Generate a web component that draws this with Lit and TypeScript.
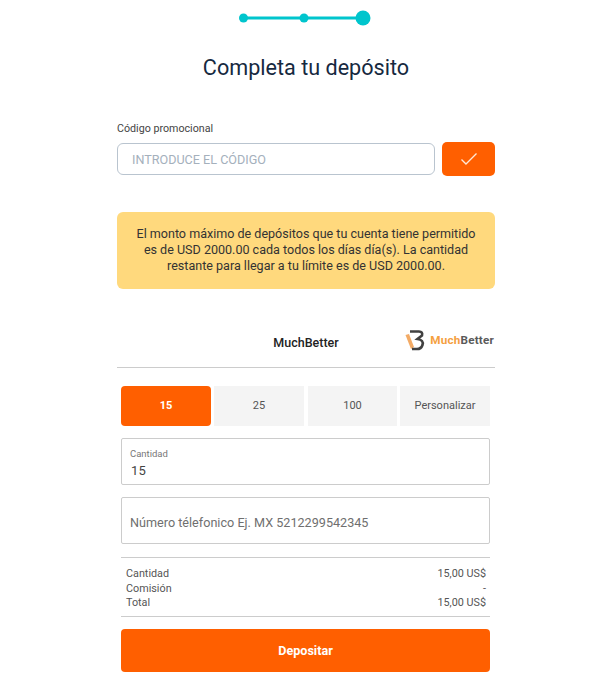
import { LitElement, html, css } from "lit";
import { customElement } from "lit/decorators.js";

@customElement("app-root")
export class AppRoot extends LitElement {
  static styles = css`
    :host { display: block; width: 610px; height: 689px; background: #fff; font-family: Roboto, sans-serif; overflow: hidden; }
    .page { padding: 0 115px 0 117px; display: flex; flex-direction: column; }
    .stepper { align-self: center; display: block; margin: 8px 0 0 0; }
    h1 { margin: 24px 0 0; font-size: 21.6px; font-weight: 400; line-height: 32px; color: #16293f; text-align: center; }
    .code-label { margin-top: 37px; font-size: 10.7px; line-height: 16px; color: #444; }
    .code-row { display: flex; gap: 7px; margin-top: 6px; }
    .code-input { flex: 1; height: 30px; border: 1px solid #b9c4cf; border-radius: 6px; padding: 0 14px; display: flex; align-items: center; font-size: 12.6px; color: #a4b0bc; }
    .code-btn { width: 53px; height: 34px; background: #ff5f00; border-radius: 5px; display: flex; align-items: center; justify-content: center; margin-top: -1px; }
    .notice { margin-top: 36px; height: 77px; box-sizing: border-box; background: #ffd97d; border-radius: 6px; padding: 7px 12px 9px; font-size: 12.55px; line-height: 16px; color: #333; text-align: center; display: flex; align-items: center; justify-content: center; }
    .method { margin-top: 25px; height: 53px; border-bottom: 1px solid #ccc; position: relative; display: flex; align-items: center; justify-content: center; }
    .method-name { font-size: 12.5px; font-weight: 500; color: #222; margin-top: 3px; }
    .logo { position: absolute; right: 1px; top: 15px; display: flex; align-items: center; gap: 4px; }
    .logo-text { font-size: 11.7px; font-weight: 700; letter-spacing: 0.2px; }
    .logo-text b { color: #f5a040; font-weight: 700; }
    .logo-text span { color: #5a5a5a; }
    .form { padding: 0 5px 0 4px; display: flex; flex-direction: column; }
    .amounts { margin-top: 18px; display: grid; grid-template-columns: repeat(4, 90px); gap: 3px; }
    .amt { height: 40px; box-sizing: border-box; padding-bottom: 2px; background: #f4f4f4; display: flex; align-items: center; justify-content: center; font-size: 11px; color: #555; }
    .amt.third { margin-left: 1px; }
    .amt.on { background: #ff5f00; color: #fff; font-weight: 700; border-radius: 4px; }
    .field { margin-top: 12px; border: 1px solid #ccc; border-radius: 2px; height: 42px; padding: 3px 8px 0; color: #444; display: flex; flex-direction: column; justify-content: center; }
    .field small { font-size: 9.5px; line-height: 12px; color: #777; }
    .field .val { font-size: 13px; line-height: 16px; margin: 3px 0 0 1px; letter-spacing: 0.3px; }
    .field.ph { font-size: 12.63px; color: #6f6f6f; }
    .sum { margin-top: 13px; border-top: 1px solid #ccc; border-bottom: 1px solid #ccc; padding: 9px 4px 6px 5px; height: 43px; font-size: 10.8px; line-height: 14.5px; color: #555; }
    .sum div { display: flex; justify-content: space-between; }
    .submit { margin-top: 12px; height: 43px; background: #ff5f00; border-radius: 4px; color: #fff; font-weight: 700; font-size: 12.6px; display: flex; align-items: center; justify-content: center; }
  `;

  render() {
    return html`
      <div class="page">
        <svg class="stepper" width="136" height="20" viewBox="0 0 136 20">
          <line x1="5" y1="10" x2="124" y2="10" stroke="#00c5cd" stroke-width="3" />
          <circle cx="5.5" cy="10" r="4.5" fill="#00c5cd" />
          <circle cx="66" cy="10" r="4.5" fill="#00c5cd" />
          <circle cx="125" cy="10" r="7.5" fill="#00c5cd" />
        </svg>
        <h1>Completa tu depósito</h1>
        <div class="code-label">Código promocional</div>
        <div class="code-row">
          <div class="code-input">INTRODUCE EL CÓDIGO</div>
          <div class="code-btn">
            <svg width="18" height="14" viewBox="0 0 18 14"><path d="M1.5 7.5 L6 12 L16.5 1.5" fill="none" stroke="#ffe9d6" stroke-width="1.4" /></svg>
          </div>
        </div>
        <div class="notice">
          <div>El monto máximo de depósitos que tu cuenta tiene permitido<br />es de USD 2000.00 cada todos los días día(s). La cantidad<br />restante para llegar a tu límite es de USD 2000.00.</div>
        </div>
        <div class="method">
          <div class="method-name">MuchBetter</div>
          <div class="logo">
            <svg width="21" height="22" viewBox="0 0 21 22">
              <path d="M0.5 6 L4 5 L9 18 L6 20 Z" fill="#f3ab66" />
              <path d="M5 2.5 H14 Q18 2.5 17 6.5 L12.5 10 Q19 11 17.5 16 Q16 20.5 11 20 H7" fill="none" stroke="#414141" stroke-width="2.6" />
            </svg>
            <div class="logo-text"><b>Much</b><span>Better</span></div>
          </div>
        </div>
        <div class="form">
          <div class="amounts">
            <div class="amt on">15</div>
            <div class="amt">25</div>
            <div class="amt third">100</div>
            <div class="amt">Personalizar</div>
          </div>
          <div class="field"><small>Cantidad</small><div class="val">15</div></div>
          <div class="field ph">Número télefonico Ej. MX 5212299542345</div>
          <div class="sum">
            <div><span>Cantidad</span><span>15,00 US$</span></div>
            <div><span>Comisión</span><span>-</span></div>
            <div><span>Total</span><span>15,00 US$</span></div>
          </div>
          <div class="submit">Depositar</div>
        </div>
      </div>
    `;
  }
}
